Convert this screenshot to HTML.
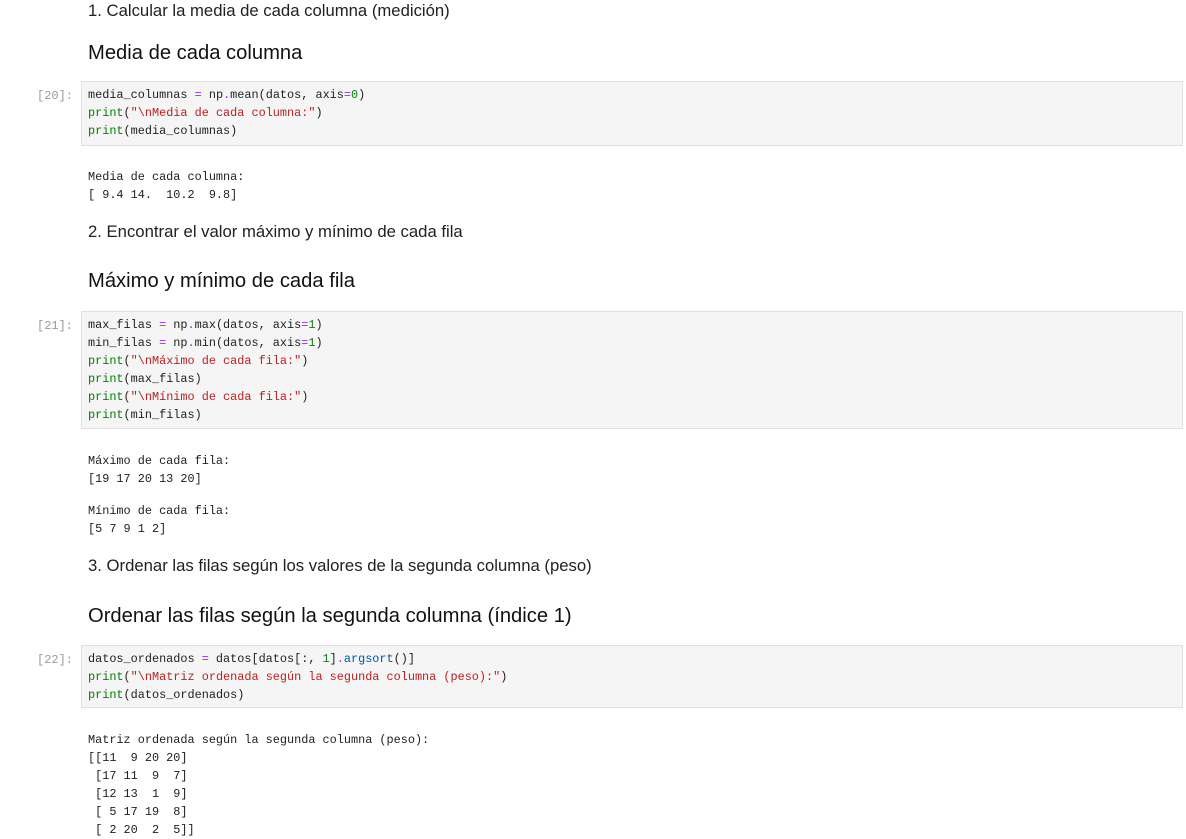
<!DOCTYPE html>
<html><head><meta charset="utf-8"><style>
body{margin:0;width:1186px;height:837px;background:#fff;position:relative;overflow:hidden;font-family:"Liberation Sans",sans-serif;color:#212121}
.t{position:absolute;left:88px;white-space:nowrap}
.p{font-size:16.7px;line-height:20px}
.h{font-size:20.2px;line-height:26px;color:#111}
.box{position:absolute;left:81px;width:1100px;background:#f5f5f5;border:1px solid #e0e0e0}
.m{position:absolute;left:88px;font-family:"Liberation Mono",monospace;font-size:11.85px;line-height:18px;white-space:pre;color:#212121}
.pr{position:absolute;left:37px;font-family:"Liberation Mono",monospace;font-size:12px;color:#999;line-height:18px}
.g{color:#008000}.r{color:#ba2121}.v{color:#aa22ff}.n{color:#080}.b{color:#0055aa}
</style></head><body>
<div class="t p" style="top:1px">1. Calcular la media de cada columna (medición)</div>
<div class="t h" style="top:40px">Media de cada columna</div>
<div class="box" style="top:81px;height:63px"></div>
<div class="pr" style="top:87px">[20]:</div>
<div class="m" style="top:86px">media_columnas <span class="v">=</span> np<span class="v">.</span>mean(datos, axis<span class="v">=</span><span class="n">0</span>)
<span class="g">print</span>(<span class="r">"\nMedia de cada columna:"</span>)
<span class="g">print</span>(media_columnas)</div>
<div class="m" style="top:168px">Media de cada columna:
[ 9.4 14.  10.2  9.8]</div>
<div class="t p" style="top:222px">2. Encontrar el valor máximo y mínimo de cada fila</div>
<div class="t h" style="top:268px">Máximo y mínimo de cada fila</div>
<div class="box" style="top:311px;height:116px"></div>
<div class="pr" style="top:317px">[21]:</div>
<div class="m" style="top:316px">max_filas <span class="v">=</span> np<span class="v">.</span>max(datos, axis<span class="v">=</span><span class="n">1</span>)
min_filas <span class="v">=</span> np<span class="v">.</span>min(datos, axis<span class="v">=</span><span class="n">1</span>)
<span class="g">print</span>(<span class="r">"\nMáximo de cada fila:"</span>)
<span class="g">print</span>(max_filas)
<span class="g">print</span>(<span class="r">"\nMínimo de cada fila:"</span>)
<span class="g">print</span>(min_filas)</div>
<div class="m" style="top:452px">Máximo de cada fila:
[19 17 20 13 20]</div>
<div class="m" style="top:502px">Mínimo de cada fila:
[5 7 9 1 2]</div>
<div class="t p" style="top:556px">3. Ordenar las filas según los valores de la segunda columna (peso)</div>
<div class="t h" style="top:603px">Ordenar las filas según la segunda columna (índice 1)</div>
<div class="box" style="top:645px;height:61px"></div>
<div class="pr" style="top:651px">[22]:</div>
<div class="m" style="top:650px">datos_ordenados <span class="v">=</span> datos[datos[:, <span class="n">1</span>]<span class="v">.</span><span class="b">argsort</span>()]
<span class="g">print</span>(<span class="r">"\nMatriz ordenada según la segunda columna (peso):"</span>)
<span class="g">print</span>(datos_ordenados)</div>
<div class="m" style="top:731px">Matriz ordenada según la segunda columna (peso):
[[11  9 20 20]
 [17 11  9  7]
 [12 13  1  9]
 [ 5 17 19  8]
 [ 2 20  2  5]]</div>
</body></html>
